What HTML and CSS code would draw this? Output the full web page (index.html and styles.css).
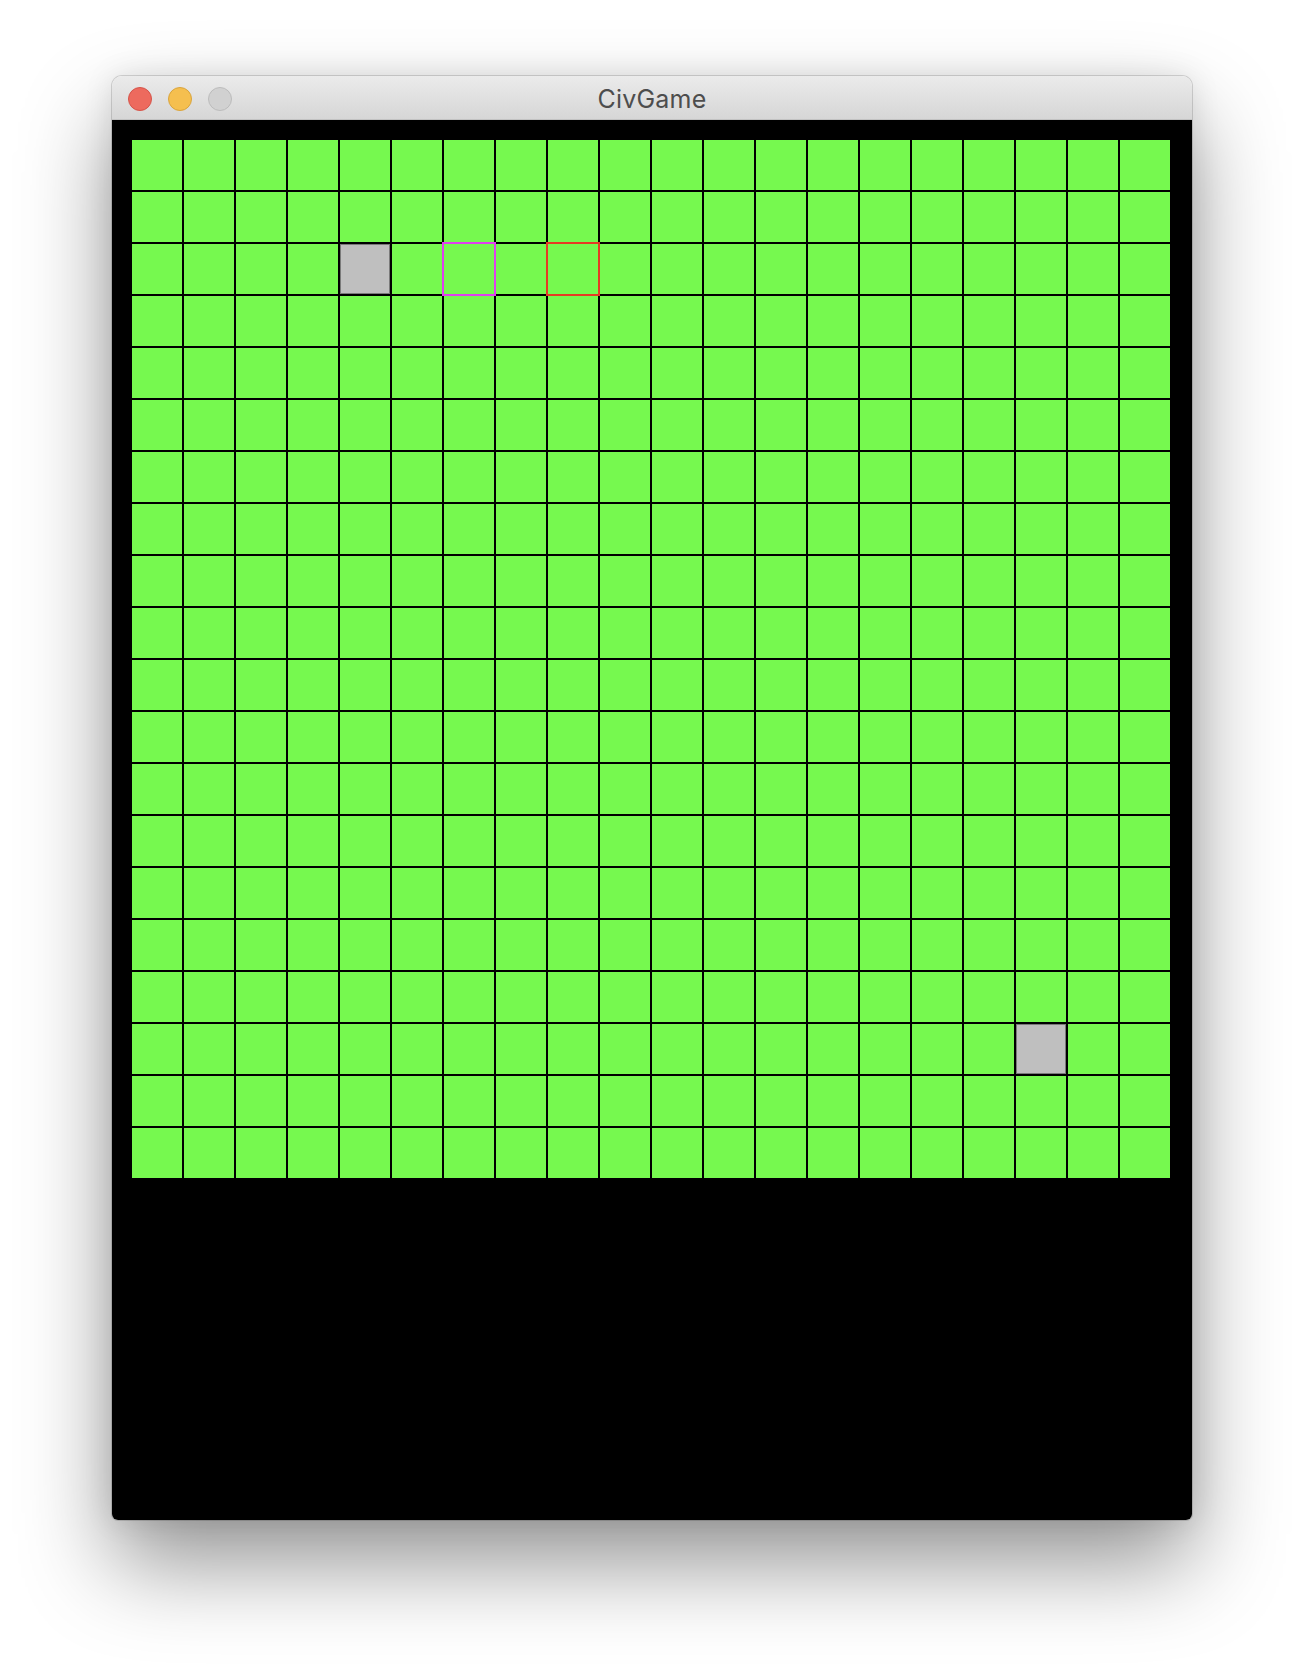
FILE: index.html
```html
<!DOCTYPE html>
<html>
<head>
<meta charset="utf-8">
<title>CivGame</title>
<link rel="stylesheet" href="styles.css">
</head>
<body>
<div class="window">
  <div class="titlebar">
    <div class="lights">
      <span class="light close"></span>
      <span class="light min"></span>
      <span class="light zoom"></span>
    </div>
    <div class="title">CivGame</div>
    <div class="spacer"></div>
  </div>
  <div class="content">
    <div class="board">
      <div class="cell"></div><div class="cell"></div><div class="cell"></div><div class="cell"></div><div class="cell"></div><div class="cell"></div><div class="cell"></div><div class="cell"></div><div class="cell"></div><div class="cell"></div><div class="cell"></div><div class="cell"></div><div class="cell"></div><div class="cell"></div><div class="cell"></div><div class="cell"></div><div class="cell"></div><div class="cell"></div><div class="cell"></div><div class="cell"></div>
      <div class="cell"></div><div class="cell"></div><div class="cell"></div><div class="cell"></div><div class="cell"></div><div class="cell"></div><div class="cell"></div><div class="cell"></div><div class="cell"></div><div class="cell"></div><div class="cell"></div><div class="cell"></div><div class="cell"></div><div class="cell"></div><div class="cell"></div><div class="cell"></div><div class="cell"></div><div class="cell"></div><div class="cell"></div><div class="cell"></div>
      <div class="cell"></div><div class="cell"></div><div class="cell"></div><div class="cell"></div><div class="cell stone"></div><div class="cell"></div><div class="cell unit-magenta"></div><div class="cell"></div><div class="cell unit-red"></div><div class="cell"></div><div class="cell"></div><div class="cell"></div><div class="cell"></div><div class="cell"></div><div class="cell"></div><div class="cell"></div><div class="cell"></div><div class="cell"></div><div class="cell"></div><div class="cell"></div>
      <div class="cell"></div><div class="cell"></div><div class="cell"></div><div class="cell"></div><div class="cell"></div><div class="cell"></div><div class="cell"></div><div class="cell"></div><div class="cell"></div><div class="cell"></div><div class="cell"></div><div class="cell"></div><div class="cell"></div><div class="cell"></div><div class="cell"></div><div class="cell"></div><div class="cell"></div><div class="cell"></div><div class="cell"></div><div class="cell"></div>
      <div class="cell"></div><div class="cell"></div><div class="cell"></div><div class="cell"></div><div class="cell"></div><div class="cell"></div><div class="cell"></div><div class="cell"></div><div class="cell"></div><div class="cell"></div><div class="cell"></div><div class="cell"></div><div class="cell"></div><div class="cell"></div><div class="cell"></div><div class="cell"></div><div class="cell"></div><div class="cell"></div><div class="cell"></div><div class="cell"></div>
      <div class="cell"></div><div class="cell"></div><div class="cell"></div><div class="cell"></div><div class="cell"></div><div class="cell"></div><div class="cell"></div><div class="cell"></div><div class="cell"></div><div class="cell"></div><div class="cell"></div><div class="cell"></div><div class="cell"></div><div class="cell"></div><div class="cell"></div><div class="cell"></div><div class="cell"></div><div class="cell"></div><div class="cell"></div><div class="cell"></div>
      <div class="cell"></div><div class="cell"></div><div class="cell"></div><div class="cell"></div><div class="cell"></div><div class="cell"></div><div class="cell"></div><div class="cell"></div><div class="cell"></div><div class="cell"></div><div class="cell"></div><div class="cell"></div><div class="cell"></div><div class="cell"></div><div class="cell"></div><div class="cell"></div><div class="cell"></div><div class="cell"></div><div class="cell"></div><div class="cell"></div>
      <div class="cell"></div><div class="cell"></div><div class="cell"></div><div class="cell"></div><div class="cell"></div><div class="cell"></div><div class="cell"></div><div class="cell"></div><div class="cell"></div><div class="cell"></div><div class="cell"></div><div class="cell"></div><div class="cell"></div><div class="cell"></div><div class="cell"></div><div class="cell"></div><div class="cell"></div><div class="cell"></div><div class="cell"></div><div class="cell"></div>
      <div class="cell"></div><div class="cell"></div><div class="cell"></div><div class="cell"></div><div class="cell"></div><div class="cell"></div><div class="cell"></div><div class="cell"></div><div class="cell"></div><div class="cell"></div><div class="cell"></div><div class="cell"></div><div class="cell"></div><div class="cell"></div><div class="cell"></div><div class="cell"></div><div class="cell"></div><div class="cell"></div><div class="cell"></div><div class="cell"></div>
      <div class="cell"></div><div class="cell"></div><div class="cell"></div><div class="cell"></div><div class="cell"></div><div class="cell"></div><div class="cell"></div><div class="cell"></div><div class="cell"></div><div class="cell"></div><div class="cell"></div><div class="cell"></div><div class="cell"></div><div class="cell"></div><div class="cell"></div><div class="cell"></div><div class="cell"></div><div class="cell"></div><div class="cell"></div><div class="cell"></div>
      <div class="cell"></div><div class="cell"></div><div class="cell"></div><div class="cell"></div><div class="cell"></div><div class="cell"></div><div class="cell"></div><div class="cell"></div><div class="cell"></div><div class="cell"></div><div class="cell"></div><div class="cell"></div><div class="cell"></div><div class="cell"></div><div class="cell"></div><div class="cell"></div><div class="cell"></div><div class="cell"></div><div class="cell"></div><div class="cell"></div>
      <div class="cell"></div><div class="cell"></div><div class="cell"></div><div class="cell"></div><div class="cell"></div><div class="cell"></div><div class="cell"></div><div class="cell"></div><div class="cell"></div><div class="cell"></div><div class="cell"></div><div class="cell"></div><div class="cell"></div><div class="cell"></div><div class="cell"></div><div class="cell"></div><div class="cell"></div><div class="cell"></div><div class="cell"></div><div class="cell"></div>
      <div class="cell"></div><div class="cell"></div><div class="cell"></div><div class="cell"></div><div class="cell"></div><div class="cell"></div><div class="cell"></div><div class="cell"></div><div class="cell"></div><div class="cell"></div><div class="cell"></div><div class="cell"></div><div class="cell"></div><div class="cell"></div><div class="cell"></div><div class="cell"></div><div class="cell"></div><div class="cell"></div><div class="cell"></div><div class="cell"></div>
      <div class="cell"></div><div class="cell"></div><div class="cell"></div><div class="cell"></div><div class="cell"></div><div class="cell"></div><div class="cell"></div><div class="cell"></div><div class="cell"></div><div class="cell"></div><div class="cell"></div><div class="cell"></div><div class="cell"></div><div class="cell"></div><div class="cell"></div><div class="cell"></div><div class="cell"></div><div class="cell"></div><div class="cell"></div><div class="cell"></div>
      <div class="cell"></div><div class="cell"></div><div class="cell"></div><div class="cell"></div><div class="cell"></div><div class="cell"></div><div class="cell"></div><div class="cell"></div><div class="cell"></div><div class="cell"></div><div class="cell"></div><div class="cell"></div><div class="cell"></div><div class="cell"></div><div class="cell"></div><div class="cell"></div><div class="cell"></div><div class="cell"></div><div class="cell"></div><div class="cell"></div>
      <div class="cell"></div><div class="cell"></div><div class="cell"></div><div class="cell"></div><div class="cell"></div><div class="cell"></div><div class="cell"></div><div class="cell"></div><div class="cell"></div><div class="cell"></div><div class="cell"></div><div class="cell"></div><div class="cell"></div><div class="cell"></div><div class="cell"></div><div class="cell"></div><div class="cell"></div><div class="cell"></div><div class="cell"></div><div class="cell"></div>
      <div class="cell"></div><div class="cell"></div><div class="cell"></div><div class="cell"></div><div class="cell"></div><div class="cell"></div><div class="cell"></div><div class="cell"></div><div class="cell"></div><div class="cell"></div><div class="cell"></div><div class="cell"></div><div class="cell"></div><div class="cell"></div><div class="cell"></div><div class="cell"></div><div class="cell"></div><div class="cell"></div><div class="cell"></div><div class="cell"></div>
      <div class="cell"></div><div class="cell"></div><div class="cell"></div><div class="cell"></div><div class="cell"></div><div class="cell"></div><div class="cell"></div><div class="cell"></div><div class="cell"></div><div class="cell"></div><div class="cell"></div><div class="cell"></div><div class="cell"></div><div class="cell"></div><div class="cell"></div><div class="cell"></div><div class="cell"></div><div class="cell stone"></div><div class="cell"></div><div class="cell"></div>
      <div class="cell"></div><div class="cell"></div><div class="cell"></div><div class="cell"></div><div class="cell"></div><div class="cell"></div><div class="cell"></div><div class="cell"></div><div class="cell"></div><div class="cell"></div><div class="cell"></div><div class="cell"></div><div class="cell"></div><div class="cell"></div><div class="cell"></div><div class="cell"></div><div class="cell"></div><div class="cell"></div><div class="cell"></div><div class="cell"></div>
      <div class="cell"></div><div class="cell"></div><div class="cell"></div><div class="cell"></div><div class="cell"></div><div class="cell"></div><div class="cell"></div><div class="cell"></div><div class="cell"></div><div class="cell"></div><div class="cell"></div><div class="cell"></div><div class="cell"></div><div class="cell"></div><div class="cell"></div><div class="cell"></div><div class="cell"></div><div class="cell"></div><div class="cell"></div><div class="cell"></div>
    </div>
  </div>
</div>
</body>
</html>
```

FILE: styles.css
```css
html, body {
  margin: 0;
  padding: 0;
  background: #ffffff;
}

body {
  padding: 76px 0 0 112px;
  height: 1668px;
  box-sizing: border-box;
  overflow: hidden;
}

.window {
  width: 1080px;
  border-radius: 10px 10px 6px 6px;
  overflow: hidden;
  box-shadow: 0 0 0 1px rgba(0, 0, 0, 0.14), 0 44px 90px rgba(0, 0, 0, 0.42), 0 0 30px rgba(0, 0, 0, 0.10);
}

.titlebar {
  height: 44px;
  box-sizing: border-box;
  border-bottom: 1px solid #c2c2c2;
  background: linear-gradient(#ebebeb, #d6d6d6);
  display: grid;
  grid-template-columns: 1fr auto 1fr;
  align-items: center;
}

.lights {
  display: flex;
  gap: 16px;
  padding-left: 16px;
}

.light {
  width: 24px;
  height: 24px;
  border-radius: 50%;
  box-sizing: border-box;
  display: block;
}

.close {
  background: #ed6a5e;
  border: 1px solid #d5544a;
}

.min {
  background: #f5bf4f;
  border: 1px solid #d9a43d;
}

.zoom {
  background: #d1d1d1;
  border: 1px solid #bcbcbc;
}

.title {
  font-family: Inter, "Noto Sans", sans-serif;
  font-size: 25px;
  color: #4d4d4d;
  line-height: 44px;
  padding-top: 1px;
  letter-spacing: 0.2px;
}

.content {
  height: 1400px;
  background: #000000;
  padding: 20px 0 0 20px;
  box-sizing: border-box;
}

.board {
  display: grid;
  grid-template-columns: repeat(20, 50px);
  grid-auto-rows: 50px;
  gap: 2px;
}

.cell {
  background: #76f94f;
}

.cell.stone {
  background: #bfbfbf;
  box-shadow: inset 0 0 0 1px #7a7a7a;
}

.cell.unit-magenta {
  outline: 2px solid #e040f0;
}

.cell.unit-red {
  outline: 2px solid #e63b24;
}
```
